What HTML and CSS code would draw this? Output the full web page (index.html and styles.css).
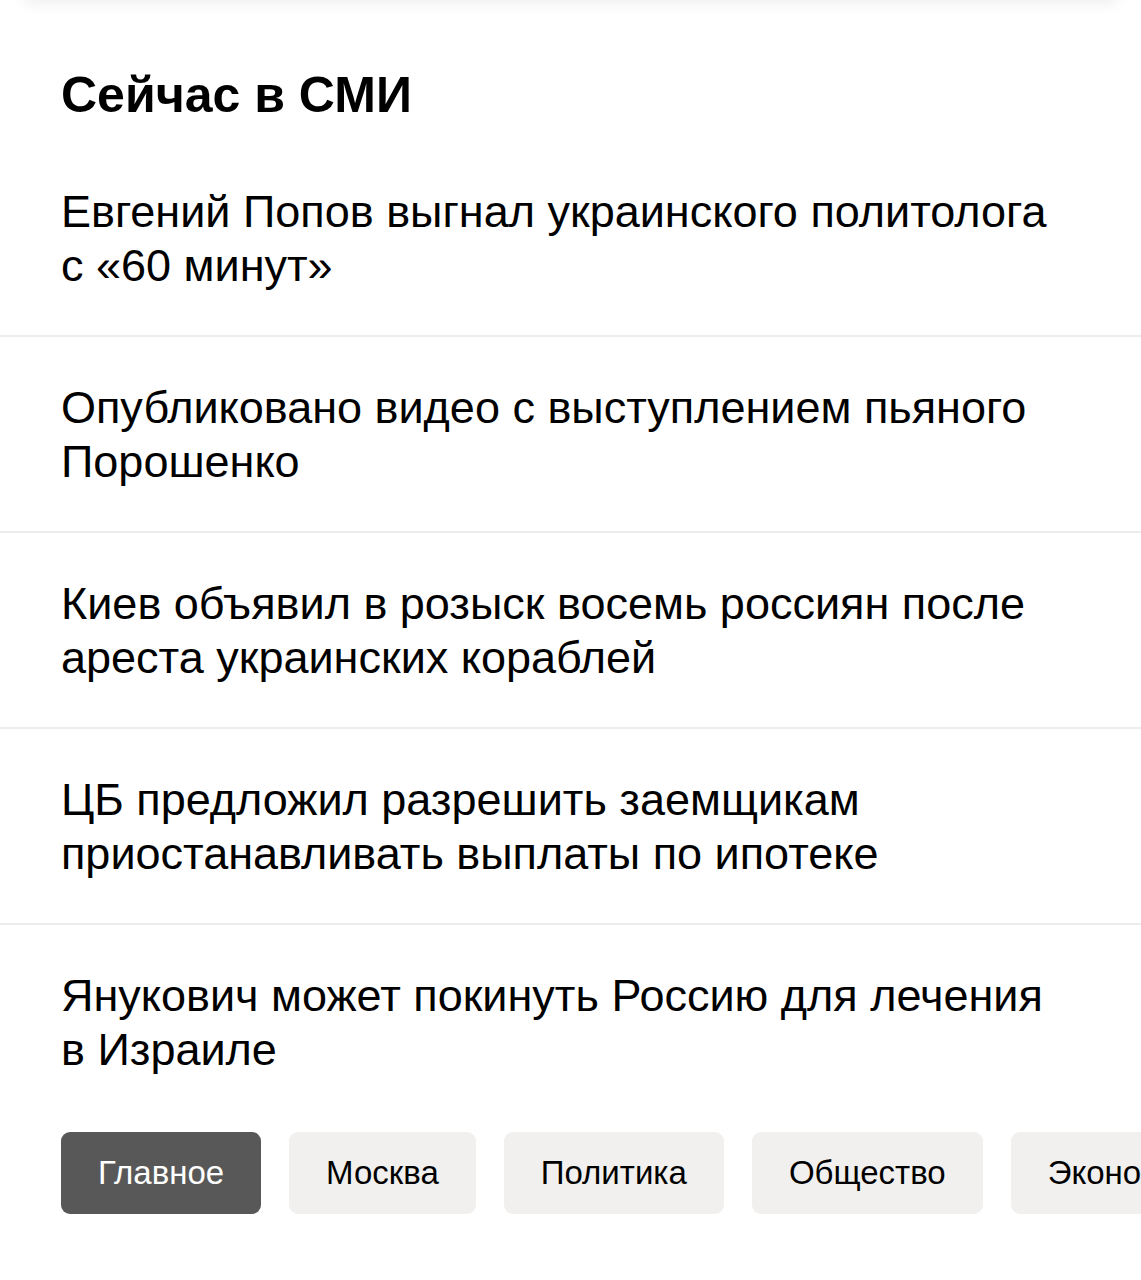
FILE: index.html
```html
<!DOCTYPE html>
<html lang="ru">
<head>
<meta charset="utf-8">
<link rel="stylesheet" href="styles.css">
</head>
<body>
<div class="page">
  <div class="prev-card"></div>
  <section class="smi">
    <h2 class="smi-title">Сейчас в СМИ</h2>
    <ul class="news">
      <li class="news-item">Евгений Попов выгнал украинского политолога с «60 минут»</li>
      <li class="news-item">Опубликовано видео с выступлением пьяного Порошенко</li>
      <li class="news-item">Киев объявил в розыск восемь россиян после ареста украинских кораблей</li>
      <li class="news-item">ЦБ предложил разрешить заемщикам приостанавливать выплаты по ипотеке</li>
      <li class="news-item">Янукович может покинуть Россию для лечения в Израиле</li>
    </ul>
    <div class="tabs">
      <span class="tab tab-active">Главное</span>
      <span class="tab">Москва</span>
      <span class="tab">Политика</span>
      <span class="tab">Общество</span>
      <span class="tab">Экономика</span>
      <span class="tab">В мире</span>
    </div>
  </section>
</div>
</body>
</html>
```

FILE: styles.css
```css
* { box-sizing: border-box; }
html, body {
  margin: 0;
  padding: 0;
  background: #ffffff;
}
body {
  font-family: "Liberation Sans", Arial, Helvetica, sans-serif;
  color: #000;
  overflow: hidden;
}
.page {
  position: relative;
  width: 1141px;
  height: 1280px;
  overflow: hidden;
}
.prev-card {
  position: absolute;
  top: -100px;
  left: 24px;
  right: 24px;
  height: 100px;
  background: #fff;
  box-shadow: 0 3px 14px rgba(0, 0, 0, 0.07);
}
.smi {
  padding-top: 65px;
}
.smi-title {
  margin: 0;
  padding: 0 61px;
  font-size: 50px;
  line-height: 60px;
  font-weight: 700;
}
.news {
  list-style: none;
  margin: 0;
  padding: 0;
}
.news-item {
  font-size: 45px;
  line-height: 54px;
  padding: 44px 70px 42px 61px;
  border-bottom: 2px solid #ececec;
}
.news-item:first-child {
  padding-top: 60px;
}
.news-item:last-child {
  border-bottom: none;
}
.tabs {
  display: flex;
  gap: 28px;
  padding: 13px 0 0 61px;
  white-space: nowrap;
}
.tab {
  flex: none;
  display: flex;
  align-items: center;
  height: 82px;
  padding: 0 37px;
  border-radius: 9px;
  background: #f1f0ee;
  font-size: 33px;
  color: #000;
}
.tab-active {
  background: #585858;
  color: #fff;
}
```
